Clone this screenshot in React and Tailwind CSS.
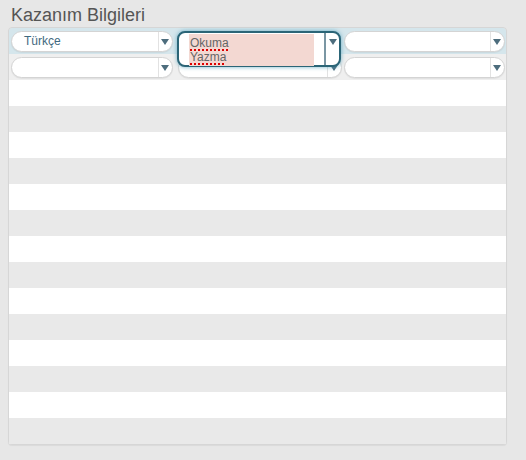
import React from "react";

function Arrow() {
  return (
    <svg width="8" height="6" viewBox="0 0 8 6" className="block">
      <path d="M0 0 L8 0 L4 6 Z" fill="#4d6d7d" />
    </svg>
  );
}

function Select({ text }) {
  return (
    <div className="flex h-[21px] items-stretch rounded-full border border-[#d4d4d4] bg-white shadow-[0_1px_1px_rgba(0,0,0,0.06)]">
      <div className="flex-1 pl-[12px] text-[12px] leading-[19px] text-[#3f6a80]">{text}</div>
      <div className="flex w-[14px] items-center justify-center border-l border-[#e2e2e2] pr-[2px]">
        <Arrow />
      </div>
    </div>
  );
}

const spell = "underline decoration-dotted decoration-[#d00] decoration-[1.5px] underline-offset-[2px]";

export default function App() {
  const rows = Array.from({ length: 14 });
  return (
    <div className="h-[460px] w-[526px] bg-[#e7e7e7] pt-[4px]" style={{ fontFamily: '"Liberation Sans", Arial, sans-serif' }}>
      <div className="pl-[11px] text-[18px] leading-[22px] text-[#555]">Kazanım Bilgileri</div>
      <div className="mx-[8px] mt-[1px] w-[499px] overflow-visible rounded-[4px] border border-[#d6d6d6] bg-[#e9e9e9] shadow-[0_1px_1px_rgba(0,0,0,0.06)]">
        <div className="grid grid-cols-[168px_167px_162px] rounded-t-[4px] bg-[#d5e6ec] pt-[3px] pb-[2px]">
          <div className="pl-[2px] pr-[4px]"><Select text="Türkçe" /></div>
          <div className="relative">
            <div className="absolute left-0 top-[0px] z-10 flex h-[36px] w-[164px] items-stretch rounded-[8px] border-2 border-[#2b6577] bg-white shadow-[0_0_4px_rgba(60,150,180,0.7)]">
              <div className="flex-1 pl-[10px] pr-[10px] pt-[1px]">
                <div className="h-[32px] bg-[#f3d8d2] text-[12px] leading-[14px] text-[#666]">
                  <div className="pl-[1px] pt-[2px]"><span className={spell}>Okuma</span></div>
                  <div className="pl-[1px]"><span className={spell}>Yazma</span></div>
                </div>
              </div>
              <div className="flex w-[15px] items-start justify-center border-l-2 border-[#7a96a3] pt-[6px]">
                <Arrow />
              </div>
            </div>
          </div>
          <div className="pl-0 pr-[1px]"><Select text="" /></div>
        </div>
        <div className="grid grid-cols-[168px_167px_162px] bg-[#efefef] pt-[3px] pb-[2px]">
          <div className="pl-[2px] pr-[4px]"><Select text="" /></div>
          <div className="pl-[1px] pr-[2px]"><Select text="" /></div>
          <div className="pl-0 pr-[1px]"><Select text="" /></div>
        </div>
        {rows.map((_, i) => (
          <div key={i} className={i % 2 === 0 ? "h-[26px] bg-white" : "h-[26px] bg-[#e9e9e9]"} />
        ))}
      </div>
    </div>
  );
}
